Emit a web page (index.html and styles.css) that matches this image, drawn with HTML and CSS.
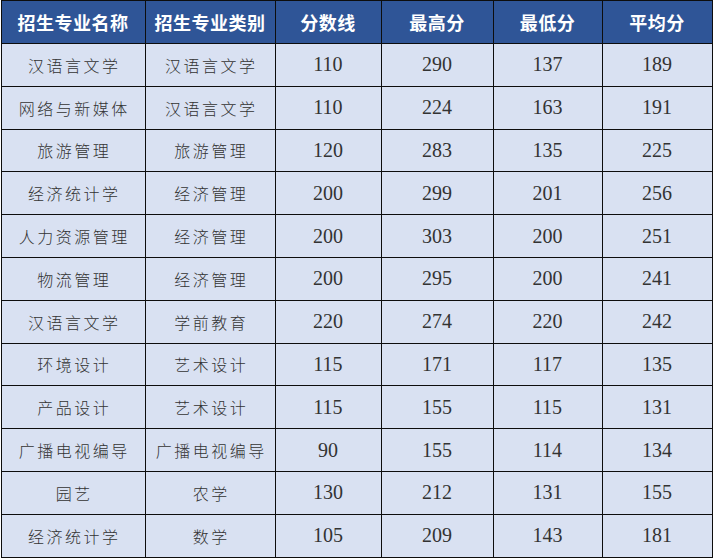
FILE: index.html
```html
<!DOCTYPE html>
<html lang="zh">
<head>
<meta charset="utf-8">
<title>招生专业分数</title>
<link rel="stylesheet" href="styles.css">
</head>
<body>
<table class="scores">
  <colgroup>
    <col class="c1"><col class="c2"><col class="c3"><col class="c4"><col class="c5"><col class="c6">
  </colgroup>
  <thead>
    <tr><th>招生专业名称</th><th>招生专业类别</th><th>分数线</th><th>最高分</th><th>最低分</th><th>平均分</th></tr>
  </thead>
  <tbody>
    <tr><td class="zh">汉语言文学</td><td class="zh">汉语言文学</td><td>110</td><td>290</td><td>137</td><td>189</td></tr>
    <tr><td class="zh">网络与新媒体</td><td class="zh">汉语言文学</td><td>110</td><td>224</td><td>163</td><td>191</td></tr>
    <tr><td class="zh">旅游管理</td><td class="zh">旅游管理</td><td>120</td><td>283</td><td>135</td><td>225</td></tr>
    <tr><td class="zh">经济统计学</td><td class="zh">经济管理</td><td>200</td><td>299</td><td>201</td><td>256</td></tr>
    <tr><td class="zh">人力资源管理</td><td class="zh">经济管理</td><td>200</td><td>303</td><td>200</td><td>251</td></tr>
    <tr><td class="zh">物流管理</td><td class="zh">经济管理</td><td>200</td><td>295</td><td>200</td><td>241</td></tr>
    <tr><td class="zh">汉语言文学</td><td class="zh">学前教育</td><td>220</td><td>274</td><td>220</td><td>242</td></tr>
    <tr><td class="zh">环境设计</td><td class="zh">艺术设计</td><td>115</td><td>171</td><td>117</td><td>135</td></tr>
    <tr><td class="zh">产品设计</td><td class="zh">艺术设计</td><td>115</td><td>155</td><td>115</td><td>131</td></tr>
    <tr><td class="zh">广播电视编导</td><td class="zh">广播电视编导</td><td>90</td><td>155</td><td>114</td><td>134</td></tr>
    <tr><td class="zh">园艺</td><td class="zh">农学</td><td>130</td><td>212</td><td>131</td><td>155</td></tr>
    <tr><td class="zh">经济统计学</td><td class="zh">数学</td><td>105</td><td>209</td><td>143</td><td>181</td></tr>
  </tbody>
</table>
</body>
</html>
```

FILE: styles.css
```css
html, body {
  margin: 0;
  padding: 0;
  background: #ffffff;
}

.scores {
  border-collapse: collapse;
  table-layout: fixed;
  width: 712px;
  margin: 0 0 0 0.5px;
  background: #d9e1f2;
}

.c1 { width: 144px; }
.c2 { width: 130px; }
.c3 { width: 106px; }
.c4 { width: 112px; }
.c5 { width: 109px; }
.c6 { width: 110px; }

.scores th,
.scores td {
  border: 1px solid #0d0d0d;
  text-align: center;
  vertical-align: middle;
  padding: 0;
}

.scores thead tr {
  height: 43px;
}

.scores th {
  background: #2f5597;
  color: #ffffff;
  font-family: "Noto Sans CJK SC", "Noto Sans", sans-serif;
  font-weight: 700;
  font-size: 18px;
  letter-spacing: 0.5px;
}

.scores tbody tr {
  height: 42.8px;
}

.scores td {
  font-family: "Liberation Serif", "Times New Roman", serif;
  font-size: 20px;
  color: #333333;
}

.scores td.zh {
  font-family: "Noto Sans CJK SC", "Noto Sans", sans-serif;
  font-size: 16px;
  font-weight: 300;
  letter-spacing: 2.5px;
  text-indent: 2.5px;
  color: #333333;
}
```
